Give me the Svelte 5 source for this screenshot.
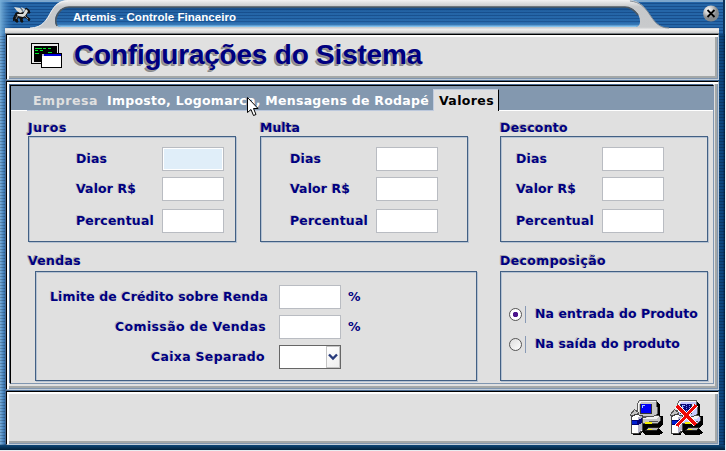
<script>
  const groups = [
    { title: 'Juros', width: 39, kind: 'juros', focused: true },
    { title: 'Multa', width: 40, kind: 'multa', focused: false },
    { title: 'Desconto', width: 68, kind: 'desconto', focused: false }
  ];
  const fields = [
    ['Dias', 31],
    ['Valor R$', 60],
    ['Percentual', 78]
  ];
  const sales = [
    ['Limite de Crédito sobre Renda', 218],
    ['Comissão de Vendas', 151],
    ['Caixa Separado', 114]
  ];
  const options = [
    ['Na entrada do Produto', 163],
    ['Na saída do produto', 145]
  ];
  let chosen = $state(0);

  // Spreads the letters so that a caption takes up the given width.
  function fit(node, width) {
    const spare = width - node.getBoundingClientRect().width;
    node.style.letterSpacing = `${spare / node.textContent.length}px`;
  }
</script>

<div class="window">
  <header class="titlebar">
    <svg class="chrome" width="725" height="34" viewBox="0 0 725 34">
      <defs>
        <pattern id="lines" width="4" height="3" patternUnits="userSpaceOnUse">
          <rect width="4" height="3" fill="#2566a8" /><rect width="4" height="1" fill="#174e8c" />
        </pattern>
        <linearGradient id="edge" x2="1" y2="0"><stop offset="0" stop-color="#76aed8" /><stop offset="1" stop-color="#2a6caf" stop-opacity="0" /></linearGradient>
        <linearGradient id="silver" x2="0" y2="1"><stop offset="0" stop-color="#f2f2f2" /><stop offset=".2" stop-color="#c6c8ca" /><stop offset=".8" stop-color="#c8cacc" /><stop offset=".87" stop-color="#ededed" /><stop offset="1" stop-color="#c4c4c4" /></linearGradient>
        <linearGradient id="glow" x2="0" y2="1"><stop offset="0" stop-color="#092f5a" stop-opacity=".55" /><stop offset=".25" stop-color="#1c5696" stop-opacity=".1" /><stop offset=".8" stop-color="#3d8bd0" stop-opacity=".15" /><stop offset="1" stop-color="#9ad4f8" /></linearGradient>
      </defs>
      <rect width="725" height="34" fill="url(#lines)" />
      <rect width="725" height="2" fill="#7ca6cc" />
      <rect width="14" height="34" fill="url(#edge)" />
      <rect x="723" width="2" height="34" fill="#0d335b" />
      <path d="M5 28H30C43 28 47 19 51 12C55 5 59 0 68 0H628C640 0 644 7 648 12C654 21 658 28 669 28H719V34H5Z" fill="url(#silver)" />
      <path d="M30 28C43 28 47 19 51 12C55 5 59 1 68 1" fill="none" stroke="#f4f4f4" />
      <path d="M630 1C640 2 644 7 648 12C654 21 658 28 669 28" fill="none" stroke="#818b94" />
      <path d="M69 7H625C633 7 640 14 640 21C640 25 638 27 634 27H61C57 27 55 24 55 21C55 14 60 7 69 7Z" fill="url(#lines)" />
      <path d="M69 7H625C633 7 640 14 640 21C640 25 638 27 634 27H61C57 27 55 24 55 21C55 14 60 7 69 7Z" fill="url(#glow)" />
      <path d="M57 26C53 18 60 7 69 7H625C631 7 635 11 638 15" fill="none" stroke="#4d5963" stroke-width="1.5" />
      <path d="M5 33.500H719" stroke="#777d82" />
    </svg>
    <svg class="horse" width="18" height="17" viewBox="0 0 18 17">
      <path d="M3 7L8 6 11 7 13 2 16 4 17 7 14 7 13 10 17 13 16 15 14 12 11 11 9 13 10 16 8 16 7 12 5 11 4 13 5 16 3 16 2 13 4 9 2 10 1 15 0 13Z" fill="#111" stroke="#111" />
      <path d="M4 8L10 8 13 3 15 5 14 7 12 10 10 11 5 10ZM1 1L7 2 10 6 7 7 4 5ZM8 1L12 3 11 6Z" fill="#dededa" />
      <path d="M5 9L3 13M12 10L15 13M8 2L10 6" stroke="#888" fill="none" />
    </svg>
    <span class="caption"><span use:fit={163}>Artemis - Controle Financeiro</span></span>
    <svg class="close" width="17" height="17" viewBox="0 0 17 17">
      <defs><radialGradient id="ball" cx=".35" cy=".28"><stop offset="0" stop-color="#fff" /><stop offset=".55" stop-color="#c9c9c9" /><stop offset="1" stop-color="#85898c" /></radialGradient></defs>
      <circle cx="8" cy="8.500" r="8" fill="url(#ball)" />
      <path d="M4.500 5L11.500 12M11.500 5L4.500 12" stroke="#000" stroke-width="1.800" />
    </svg>
  </header>

  <div class="frame">
    <section class="panel heading">
      <svg width="31" height="26" viewBox="0 0 31 26" shape-rendering="crispEdges">
        <path d="M0 1H28V22H0Z" fill="#000" /><path d="M1 2H27V21H1Z" fill="#e8e8e8" />
        <path d="M3 4H26V20H3Z" fill="#000" />
        <path d="M4 6.500H11M12 6.500H15M17 6.500H20M4 8.500H7M9 8.500H12M4 11.500H8M10 11.500H14M17 10.500H21" stroke="#00e626" />
        <path d="M10 11H31V26H10Z" fill="#000" />
        <path d="M11 12H30V14H11Z" fill="#0000d8" /><path d="M11 12H13V14H11Z" fill="#b8c0d8" /><path d="M11 14H30V25H11Z" fill="#fff" />
      </svg>
      <h1><span use:fit={348}>Configurações do Sistema</span></h1>
    </section>

    <section class="panel body">
      <div class="page">
        <nav>
          <span class="tab off"><span use:fit={65}>Empresa</span></span>
          <span class="tab long"><span use:fit={322}>Imposto, Logomarca, Mensagens de Rodapé</span></span>
          <span class="tab on"><span use:fit={55}>Valores</span></span>
          <i></i>
        </nav>
        <div class="row">
          {#each groups as g}
            <div class="group {g.kind}">
              <h2><span use:fit={g.width}>{g.title}</span></h2>
              <div class="box fields">
                {#each fields as [name, width], i}
                  <label><b><span use:fit={width}>{name}</span></b><input class:focused={g.focused && i === 0} /></label>
                {/each}
              </div>
            </div>
          {/each}
        </div>
        <div class="row lower">
          <div class="group">
            <h2><span use:fit={53}>Vendas</span></h2>
            <div class="box sales">
              {#each sales as [name, width], i}
                <label class="sale s{i}">
                  <b><span use:fit={width}>{name}</span></b>
                  {#if i < 2}
                    <input /><em>%</em>
                  {:else}
                    <span class="combo"><i><svg width="10" height="8" viewBox="0 0 10 8"><path d="M1 1.500L5 5.500 9 1.500" fill="none" stroke="#26397a" stroke-width="2.400" /></svg></i></span>
                  {/if}
                </label>
              {/each}
            </div>
          </div>
          <div class="group decomp">
            <h2><span use:fit={106}>Decomposição</span></h2>
            <div class="box options">
              {#each options as [name, width], i}
                <label class="option"><input type="radio" name="when" checked={chosen === i} onchange={() => (chosen = i)} /><u></u><b><span use:fit={width}>{name}</span></b></label>
              {/each}
            </div>
          </div>
        </div>
      </div>
    </section>

    <section class="panel footer">
      {#each [false, true] as cancel}
        {@const face = cancel ? '#c5c8ff' : '#c6c6c6'}
        <svg width="36" height="37" viewBox="0 0 36 37" shape-rendering="crispEdges">
          <path d="M11 3H29L31 6V17H34V26L30 29 34 34 30 36H17L13 33 12 36H4V21Z" fill="#000" />
          <path d="M10.500 1.500H27.500L28.500 14.500 25.500 17.500H12.500L8.500 15.500V4.500Z" fill={face} stroke="#606060" />
          <path d="M11 2H27V3H12L10 5V14H9V5Z" fill="#f6f6f6" />
          <path d="M11 5H23V15H11Z" fill="#333" /><path d="M12 5H22V14H12Z" fill={cancel ? '#05057a' : '#0000f4'} />
          <path d="M13.500 9V6.500H16" stroke="#a8c8ff" fill="none" />
          {#if cancel}<path d="M14.500 6V13M17.500 5V12M20.500 6V13" stroke="#7885ef" stroke-dasharray="1 1" />{/if}
          <path d="M13.500 18.500L29.500 16.500 31.500 18.500V21.500L28.500 24.500H13.500Z" fill={face} stroke="#505050" />
          <path d="M14 19L29 17 30 18 27 20H14Z" fill="#f2f2f2" />
          <path d="M20 22.500H29" stroke="#555" /><path d="M16 24H23" stroke="#f4ee00" stroke-width="2" />
          <path d="M19.500 28.500H30.500L27.500 31.500H16.500Z" fill="#b4b4b4" stroke="#222" /><path d="M19 30.500H23" stroke="#f4ee00" />
          <path d="M1.500 15.500L5.500 10.500 9.500 13.500 7.500 17.500H2.500Z" fill="#c4c4c4" stroke="#555" />
          <path d="M2.500 17.500L6.500 15.500 13.500 16.500V31.500L9.500 34.500H2.500Z" fill="#fff" stroke="#444" /><path d="M9 18L13 17V31L9 34Z" fill="#b4b4c8" />
          <path d="M3 21H9L13 19V24L9 26H3Z" fill="#000078" /><path d="M3 22H8V25H3Z" fill="#0020d0" />
          {#if cancel}
            <path d="M8 7L27 26M27 6L8 27" stroke="#fff" stroke-width="4.500" />
            <path d="M8 7L27 26M27 6L8 27" stroke="#ee0808" stroke-width="3" />
          {/if}
        </svg>
      {/each}
    </section>
  </div>
  <svg class="cursor" width="13" height="21" viewBox="0 0 13 21"><path d="M.5 .5V15.500L4 12.500 6.500 18.500 9 17.500 6.500 11.500H11Z" fill="#fff" stroke="#000" /></svg>
</div>

<style>
  :global(body) { margin: 0; background: #e8ecf0; overflow: hidden; }
  * { box-sizing: border-box; }
  .window { position: relative; width: 725px; height: 450px; font: bold 12.5px/16px "DejaVu Sans", Verdana, sans-serif; color: #000080;
    background: repeating-linear-gradient(#0003 0 1px, #0000 1px 3px), linear-gradient(90deg, #79aedb 0, #2463a4 6px, #2463a4 718px, #104a80 719px, #0c437c 723px, #001d3d 725px); }
  .window span { white-space: nowrap; }
  .titlebar { position: relative; height: 34px; display: flex; align-items: flex-start; }
  .chrome { position: absolute; left: 0; top: 0; }
  .horse { position: relative; margin: 6px 0 0 13px; }
  .caption { position: relative; margin: 9px 0 0 42px; width: 600px; font: bold 11.5px/16px "Liberation Sans", Arial, sans-serif; color: #fff; }
  .close { position: relative; margin: 5px 0 0 30px; flex: none; }
  .frame { height: 416px; padding: 0 6px 0 5px; background: linear-gradient(#0d4778, #001f3a) 0 100% / 100% 5px no-repeat; display: flex; flex-direction: column; }
  .panel { border: 1px solid; border-color: #000 #c2cedb #c2cedb #000; margin-left: 1px; background: #e0e0e0;
    box-shadow: -1px 0 #4a6a90, inset 0 2px #fff, inset 2px 0 #fff, inset -1px -1px #8096b0, inset -3px -3px #a4a8a8; }
  .heading { height: 46px; display: flex; padding: 7px 0 0 24px; }
  h1 { margin: -3px 0 0 12px; font: bold 28px/32px "Liberation Sans", Arial, sans-serif; text-shadow: -1px 1px #999, -2px 2px #888; }
  .body { height: 309px; margin-top: 1px; padding: 3px 4px 5px 3px;
    box-shadow: -1px -1px #4a6a90, inset 0 2px #fff, inset 2px 0 #fff, inset -1px -1px #8096b0, inset -3px -3px #a4a8a8; }
  .page { height: 100%; border: 1px solid #8096b0; border-top-color: #000; border-left-color: #000; background: #e0e0e0; box-shadow: -1px -1px #4a6a90; }
  nav { height: 25px; background: #8398af; display: flex; align-items: stretch; color: #fff; }
  .tab { border-bottom: 1px solid #bcc8dc; padding-top: 7px; flex: none; }
  .off { width: 96px; padding-left: 22px; color: #e0e0e0; border-image: linear-gradient(90deg, #fff 17px, #bcc8dc 17px) 1; }
  .long { width: 326px; }
  .on { width: 66px; margin-top: 3px; padding: 3px 0 0 5px; color: #000; background: #e0e0e0; border: 1px solid #c0cce0; border-right: 1px solid #000; border-bottom: 0; }
  nav i { flex: 1; border-bottom: 1px solid #fff; }
  .row { display: flex; padding-left: 17px; }
  h2 { margin: 0; font: inherit; height: 16px; text-shadow: -1px 0 #aaa, -1px -1px #aaa; }
  .group { padding-top: 9px; width: 208px; flex: none; }
  .multa { margin-left: 24px; }
  .desconto { margin-left: 32px; }
  .box { border: 1px solid #426084; box-shadow: 1px 1px #b5c2d2, inset 1px 1px #b5c2d2; }
  .fields { height: 106px; padding: 10px 11px 0 47px; display: flex; flex-direction: column; gap: 6px; }
  .multa .fields { padding-left: 29px; padding-right: 29px; }
  .desconto .fields { padding-left: 15px; padding-right: 43px; }
  label { display: flex; justify-content: space-between; height: 24px; }
  label b { padding-top: 4px; text-shadow: -1px -1px #c0c0c0; }
  .fields label:last-child { margin-top: 2px; }
  input:not([type]) { width: 62px; height: 24px; border: 1px solid #b9bcc2; background: #fff; margin: 0; border-radius: 0; flex: none; outline: none; }
  input.focused { background: #e0eef9; box-shadow: inset 0 0 0 1px #fff; }
  .lower { margin-top: 2px; }
  .lower .group { width: 472px; }
  .lower .group h2 { height: 18px; }
  .sales { width: 442px; height: 110px; margin-left: 7px; padding: 13px 0 0 14px; display: flex; flex-direction: column; gap: 6px; }
  .sale { justify-content: flex-start; }
  .sale b { width: 218px; text-align: right; margin-right: 11px; }
  .s1 b { padding-right: 2px; }
  .s2 b { padding-right: 3px; }
  em { font-style: normal; margin: 4px 0 0 7px; }
  .combo { width: 62px; height: 24px; border: 1px solid #666; background: #fff; display: flex; justify-content: flex-end; }
  .combo i { width: 14px; background: linear-gradient(135deg, #fff, #eee); border: 1px solid #c4c4c4; display: grid; place-items: center; }
  .lower .decomp { width: 208px; }
  .options { height: 110px; padding: 27px 0 0 8px; }
  .option { height: 30px; justify-content: flex-start; align-items: center; }
  .option input { appearance: none; width: 13px; height: 13px; margin: 0 3px 0 0; border: 1px solid #555; border-radius: 50%; background: linear-gradient(135deg, #ddd, #fff); }
  .option input:checked { background: radial-gradient(#4c168c 0 2.500px, #fff 3px); }
  u { width: 1px; height: 17px; background: #8799b5; margin-right: 9px; text-decoration: none; }
  .option b { padding: 0; }
  .footer { height: 54px; margin-top: 1px; display: flex; justify-content: flex-end; gap: 4px; padding: 7px 13px 0 0;
    box-shadow: -1px -1px #4a6a90, inset 0 2px #fff, inset 2px 0 #fff, inset -1px -1px #8096b0, inset -3px -3px #a4a8a8; }
  .cursor { position: absolute; left: 247px; top: 97px; }
</style>
